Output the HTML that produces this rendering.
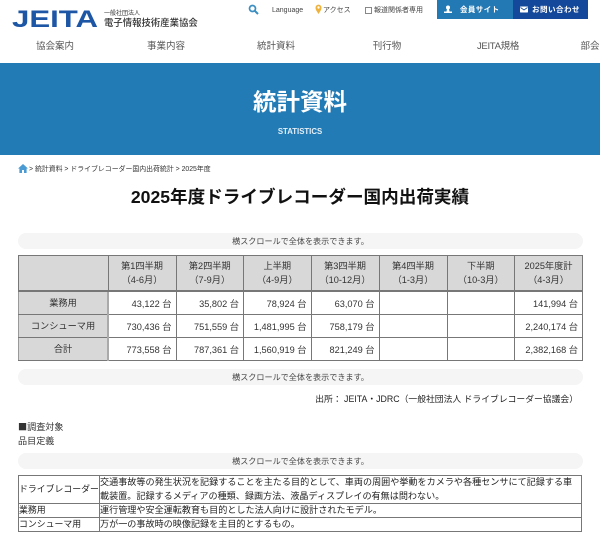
<!DOCTYPE html>
<html lang="ja">
<head>
<meta charset="utf-8">
<title>2025年度ドライブレコーダー国内出荷実績</title>
<style>
html,body{margin:0;padding:0;background:#fff}
body{width:600px;height:534px;position:relative;overflow:hidden;font-family:"Liberation Sans","Noto Sans CJK JP",sans-serif;color:#222}
.a{position:absolute;white-space:nowrap}
.c{text-align:center}
.nav{top:40px;font-size:9.5px;line-height:14px;color:#555;transform:translateX(-50%)}
.top{top:5px;font-size:7px;line-height:11px;color:#444}
.pill{position:absolute;left:18px;width:565px;height:16px;border-radius:8px;background:#f5f5f5;text-align:center;font-size:8.1px;line-height:17px;color:#444}
table{position:absolute;border-collapse:collapse;table-layout:fixed}
#t1{left:18px;top:255px;width:564px;height:105px;font-size:9.2px;color:#333}
#t1 th,#t1 td{border:1px solid #777;padding:0;font-weight:normal}
#t1 th{background:#d8d8d8;text-align:center;line-height:14px}
#t1 td{text-align:right;padding-right:4px;background:#fff}
#t1 thead th{border-bottom:2px solid #777;padding-top:1px}
#t1 tbody th{border-right:2px solid #aaa;border-left-color:#999}
#t2{left:18px;top:475px;width:564px;font-size:9.1px;color:#222}
#t2 td{border:1px solid #777;padding:0;line-height:13px;white-space:nowrap}
#t2 td:first-child{font-size:8.9px}
#t2 tr:first-child td{line-height:13.5px}
</style>
</head>
<body>
<svg class="a" style="left:0;top:0" width="105" height="32" viewBox="0 0 105 32">
<text x="12" y="27" font-family="Liberation Sans" font-weight="700" font-size="24" fill="#1d56a5" textLength="86" lengthAdjust="spacingAndGlyphs">JEITA</text>
</svg>
<div class="a" style="left:104px;top:10px;font-size:6px;line-height:8px;color:#333">一般社団法人</div>
<div class="a" style="left:104px;top:16px;font-size:9.4px;line-height:13px;color:#333;font-weight:500">電子情報技術産業協会</div>

<svg class="a" style="left:248px;top:4px" width="11" height="11" viewBox="0 0 11 11"><circle cx="4.5" cy="4.5" r="3" fill="none" stroke="#3b8ec2" stroke-width="1.7"/><path d="M6.8 6.8L10 10" stroke="#3b8ec2" stroke-width="2"/></svg>
<div class="a top" style="left:272px;font-family:'Liberation Sans',sans-serif;font-size:7px">Language</div>
<svg class="a" style="left:315px;top:4px" width="7" height="10" viewBox="0 0 7 10"><path d="M3.5 10C2 7.5.5 6 .5 3.6a3 3 0 0 1 6 0C6.5 6 5 7.5 3.5 10z" fill="#efb23c"/><circle cx="3.5" cy="3.5" r="1.2" fill="#fff"/></svg>
<div class="a top" style="left:323px">アクセス</div>
<div class="a" style="left:365px;top:6.5px;width:5px;height:5px;border:1px solid #888"></div>
<div class="a top" style="left:374px">報道関係者専用</div>

<div class="a" style="left:437px;top:0;width:76px;height:19px;background:#2379b4"></div>
<div class="a" style="left:513px;top:0;width:75px;height:19px;background:#14489a"></div>
<svg class="a" style="left:444px;top:5px" width="8" height="9" viewBox="0 0 8 9"><circle cx="4" cy="2.5" r="2" fill="#fff"/><path d="M3 4h2l.5 2.5H8V8H0V6.500h2.500z" fill="#fff"/></svg>
<div class="a" style="left:460px;top:4px;font-size:7.5px;line-height:12px;color:#fff;font-weight:700;letter-spacing:.4px">会員サイト</div>
<svg class="a" style="left:520px;top:6px" width="8" height="7" viewBox="0 0 8 7"><rect y=".5" width="8" height="6" rx=".6" fill="#fff"/><path d="M.5 1.5L4 4l3.5-2.5" fill="none" stroke="#14489a" stroke-width=".8"/></svg>
<div class="a" style="left:532px;top:4px;font-size:7.6px;line-height:12px;color:#fff;font-weight:700;letter-spacing:.4px">お問い合わせ</div>

<div class="a nav" style="left:55px">協会案内</div>
<div class="a nav" style="left:166px">事業内容</div>
<div class="a nav" style="left:276px">統計資料</div>
<div class="a nav" style="left:387px">刊行物</div>
<div class="a nav" style="left:498px;letter-spacing:-.3px">JEITA規格</div>
<div class="a nav" style="left:590px">部会</div>

<div class="a" style="left:0;top:63px;width:600px;height:92px;background:#237bb6"></div>
<div class="a c" style="left:0;width:600px;top:87px;font-size:23.5px;line-height:31px;color:#fff;font-weight:700">統計資料</div>
<div class="a c" style="left:0;width:600px;top:126px;font-size:7.8px;line-height:11px;color:#e4eff7;font-weight:700">STATISTICS</div>

<svg class="a" style="left:18px;top:164px" width="10" height="9" viewBox="0 0 10 9"><path d="M5 0L0 4.5h1.4V9h2.600V6h2v3h2.600V4.5H10z" fill="#4a9bd3"/></svg>
<div class="a" style="left:29px;top:164px;font-size:6.9px;line-height:11px;color:#333">&gt; 統計資料 &gt; ドライブレコーダー国内出荷統計 &gt; 2025年度</div>

<div class="a c" style="left:0;width:600px;top:184px;font-size:17.6px;line-height:26px;color:#111;font-weight:700">2025年度ドライブレコーダー国内出荷実績</div>

<div class="pill" style="top:233px">横スクロールで全体を表示できます。</div>

<table id="t1">
<colgroup><col style="width:89.5px"><col style="width:68px"><col style="width:67.5px"><col style="width:67.5px"><col style="width:68px"><col style="width:68px"><col style="width:67.5px"><col style="width:68px"></colgroup>
<thead><tr style="height:35px"><th></th><th>第1四半期<br>（4-6月）</th><th>第2四半期<br>（7-9月）</th><th>上半期<br>（4-9月）</th><th>第3四半期<br>（10-12月）</th><th>第4四半期<br>（1-3月）</th><th>下半期<br>（10-3月）</th><th>2025年度計<br>（4-3月）</th></tr></thead>
<tbody>
<tr style="height:24px"><th>業務用</th><td>43,122 台</td><td>35,802 台</td><td>78,924 台</td><td>63,070 台</td><td></td><td></td><td>141,994 台</td></tr>
<tr style="height:23px"><th>コンシューマ用</th><td>730,436 台</td><td>751,559 台</td><td>1,481,995 台</td><td>758,179 台</td><td></td><td></td><td>2,240,174 台</td></tr>
<tr style="height:23px"><th>合計</th><td>773,558 台</td><td>787,361 台</td><td>1,560,919 台</td><td>821,249 台</td><td></td><td></td><td>2,382,168 台</td></tr>
</tbody>
</table>

<div class="pill" style="top:369px">横スクロールで全体を表示できます。</div>
<div class="a" style="right:22px;top:392px;font-size:8.8px;line-height:14px;color:#222">出所： JEITA・JDRC（一般社団法人 ドライブレコーダー協議会）</div>

<div class="a" style="left:18px;top:419px;font-size:9.1px;line-height:14px;color:#333;font-family:'Noto Sans CJK JP',sans-serif">■調査対象</div>
<div class="a" style="left:18px;top:434px;font-size:9.1px;line-height:14px;color:#333">品目定義</div>

<div class="pill" style="top:453px">横スクロールで全体を表示できます。</div>

<table id="t2">
<colgroup><col style="width:81px"><col></colgroup>
<tr><td>ドライブレコーダー</td><td>交通事故等の発生状況を記録することを主たる目的として、車両の周囲や挙動をカメラや各種センサにて記録する車<br>載装置。記録するメディアの種類、録画方法、液晶ディスプレイの有無は問わない。</td></tr>
<tr><td>業務用</td><td>運行管理や安全運転教育も目的とした法人向けに設計されたモデル。</td></tr>
<tr><td>コンシューマ用</td><td>万が一の事故時の映像記録を主目的とするもの。</td></tr>
</table>
</body>
</html>
